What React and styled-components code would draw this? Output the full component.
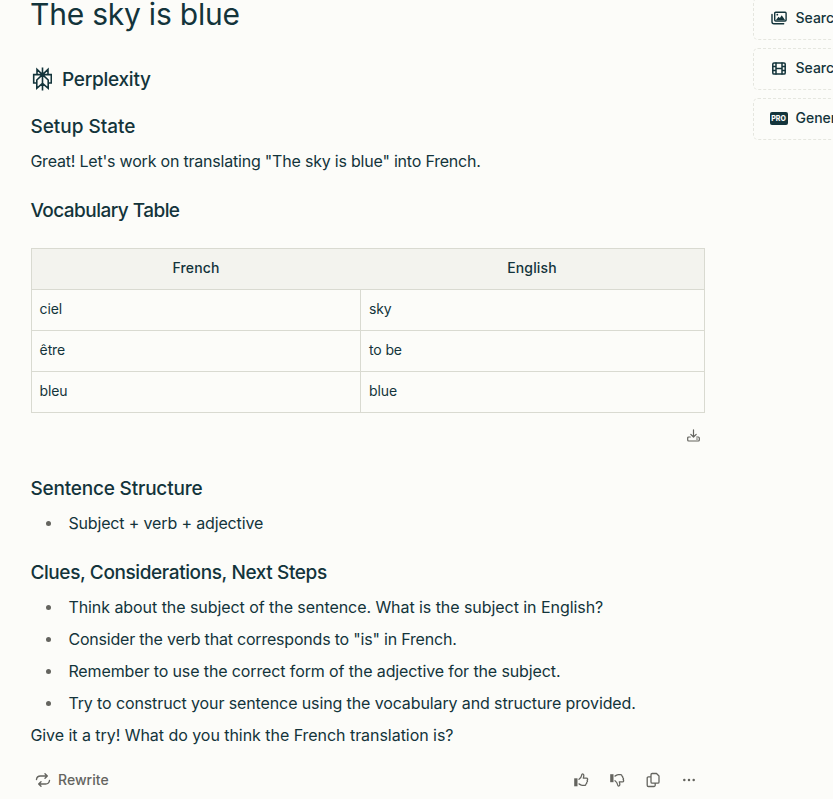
import React from "react";
import styled, { createGlobalStyle } from "styled-components";

const INK = "#13343b";
const MUTED = "#64645f";
const LINE = "#d9dad1";

const Global = createGlobalStyle`
  * { box-sizing: border-box; }
  html, body { margin: 0; background: #fcfcf9; overflow: hidden; }
  body {
    font-family: Inter, "Liberation Sans", sans-serif;
    color: ${INK};
    -webkit-font-smoothing: antialiased;
  }
`;

const Page = styled.div`
  display: flex;
  gap: 48px;
  width: 833px;
  height: 799px;
  padding-left: 30px;
  overflow: hidden;
`;
const Main = styled.main`
  flex: 0 0 675px;
`;
const Title = styled.h1`
  margin: 0;
  font-size: 30px;
  font-weight: 400;
  line-height: 29px;
  letter-spacing: -0.22px;
`;
const Brand = styled.div`
  display: flex;
  align-items: center;
  gap: 10px;
  height: 24px;
  margin-top: 38px;
  padding-left: 2px;
  font-size: 19px;
  font-weight: 500;
  letter-spacing: -0.26px;
`;
const Section = styled.section`
  margin-top: ${(p) => p.$top}px;
`;
const Heading = styled.h2`
  margin: 0;
  height: 28px;
  padding-left: 0.4px;
  font-size: 19px;
  font-weight: 500;
  line-height: 28px;
  white-space: nowrap;
  letter-spacing: ${(p) => p.$track}px;
`;
const Text = styled.p`
  margin: ${(p) => p.$top || 0}px 0 0;
  padding-left: 0.4px;
  font-size: 16px;
  line-height: 24px;
  white-space: nowrap;
  letter-spacing: ${(p) => p.$track}px;
`;
const List = styled.ul`
  list-style: none;
  margin: 8px 0 0;
  padding: 0;
  display: grid;
  gap: 8px;
`;
const Item = styled.li`
  display: flex;
  align-items: center;
  height: 24px;
  padding-left: 16px;
  &::before {
    content: "";
    width: 5px;
    height: 5px;
    margin-right: 17px;
    border-radius: 50%;
    background: ${MUTED};
  }
`;
const Table = styled.table`
  width: 674px;
  margin: 23px 0 0 1px;
  border-collapse: separate;
  border-spacing: 0;
  table-layout: fixed;
  border: 1px solid ${LINE};
  font-size: 14px;
`;
const Th = styled.th`
  height: 41px;
  width: ${(p) => p.$width}px;
  padding: 0 0 3px;
  font-weight: 500;
  text-align: center;
  background: #f3f3ee;
  border-bottom: 1px solid ${LINE};
  letter-spacing: 0.15px;
`;
const Td = styled.td`
  height: 41px;
  padding: 0 8px 3px 7.6px;
  border-bottom: 1px solid ${LINE};
  letter-spacing: -0.12px;
  & + & { border-left: 1px solid ${LINE}; padding-left: 8px; }
  tr:last-child > & { height: 40px; padding-bottom: 3px; border-bottom: 0; }
`;
const TableTools = styled.div`
  display: flex;
  justify-content: flex-end;
  height: 61px;
  padding: 16px 5.5px 0 0;
  color: ${MUTED};
`;
const Footer = styled.footer`
  display: flex;
  align-items: center;
  justify-content: space-between;
  height: 24px;
  margin-top: 21px;
  padding: 0 8px 0 5px;
  color: ${MUTED};
`;
const Rewrite = styled.button`
  display: flex;
  align-items: center;
  gap: 7px;
  padding: 0;
  border: 0;
  background: none;
  color: inherit;
  font: 500 14px/24px Inter, "Liberation Sans", sans-serif;
  letter-spacing: 0.04px;
`;
const Actions = styled.div`
  display: flex;
  align-items: center;
  gap: 20px;
`;
const Aside = styled.aside`
  flex: 0 0 320px;
  display: flex;
  flex-direction: column;
  gap: 8px;
  margin-top: -2px;
`;
const Card = styled.div`
  display: flex;
  align-items: center;
  height: 42px;
  padding: 0 0 2px 15px;
  border: 1px dashed #e5e6df;
  border-radius: 5px;
  font-size: 14px;
  font-weight: 500;
  white-space: nowrap;
`;
const CardLabel = styled.span`
  line-height: 17px;
  padding-bottom: 1px;
  letter-spacing: -0.05px;
`;
const CardIcon = styled.span`
  display: flex;
  justify-content: center;
  width: 20px;
  margin: 0 6.6px 0 0;
`;
const Pro = styled.span`
  width: 18px;
  height: 13px;
  margin-right: 1px;
  border-radius: 2px;
  background: ${INK};
  color: #fcfcf9;
  font-size: 7px;
  font-weight: 800;
  line-height: 13px;
  text-align: center;
`;

const stroke = { fill: "none", stroke: "currentColor", strokeLinejoin: "round", strokeLinecap: "round" };

const Logo = () => (
  <svg width="20" height="24" viewBox="0 0 20 24" fill="none" stroke="currentColor" strokeWidth="1.6">
    <path d="M10.5 .5v23M10.5 7.6L5 2.3v5.3M10.5 7.6L16 2.3v5.3M4.5 16H1.7V7.6h17.6V16h-2.8M10.5 7.6L4.8 13v8.3l5.7-5M10.5 7.6l5.7 5.4v8.3l-5.7-5" />
  </svg>
);
const Download = () => (
  <svg width="13" height="13" viewBox="0 0 13 13" {...stroke} strokeWidth="1.2">
    <path d="M6.5 .8v7M3.8 5.3l2.7 2.7 2.7-2.7M3.3 8H1.7a1 1 0 0 0-1 1v2a1 1 0 0 0 1 1h9.6a1 1 0 0 0 1-1V9a1 1 0 0 0-1-1H9.7" />
    <circle cx="10" cy="10" r=".25" />
  </svg>
);
const Repeat = () => (
  <svg width="16" height="16" viewBox="0 0 16 16" {...stroke} strokeWidth="1.4">
    <path d="M1.5 7.5A4 4 0 0 1 5.5 4h6.8M10 1.8L12.3 4 10 6.2M14.5 8.5a4 4 0 0 1-4 3.5H3.7M6 9.8L3.7 12 6 14.2" />
  </svg>
);
const ThumbUp = () => (
  <svg width="16" height="16" viewBox="0 0 16 16" {...stroke} strokeWidth="1.25">
    <path fill="currentColor" stroke="none" d="M1.2 6.3h3.3v8H1.2z" />
    <path d="M6 7.3c1.5-1 2.3-2.3 2.6-4 .2-1 .6-1.5 1.3-1.3 1.1.3 1.2 1.6.4 4.1h3.1c1.4 0 1.7 1.5.7 2.1.7.7.5 1.6-.4 2 .3.8 0 1.5-.8 1.8.1.9-.5 1.4-1.4 1.4H9.4c-1.4 0-2.2-.8-3.4-1.5" />
  </svg>
);
const ThumbDown = () => (
  <svg width="16" height="16" viewBox="0 0 16 16" {...stroke} strokeWidth="1.25">
    <path fill="currentColor" stroke="none" d="M1.2 2.2h3.3v8H1.2z" />
    <path d="M6 8.7c1.5 1 2.3 2.3 2.6 4 .2 1 .6 1.5 1.3 1.3 1.1-.3 1.2-1.6.4-4.1h3.1c1.4 0 1.7-1.5.7-2.1.7-.7.5-1.6-.4-2 .3-.8 0-1.5-.8-1.8.1-.9-.5-1.4-1.4-1.4H9.4c-1.4 0-2.2.8-3.4 1.5" />
  </svg>
);
const Copy = () => (
  <svg width="16" height="16" viewBox="0 0 16 16" {...stroke} strokeWidth="1.3">
    <path d="M7.2 1.5h4.3L14 4v6a1.2 1.2 0 0 1-1.2 1.2H7.2A1.2 1.2 0 0 1 6 10V2.7A1.2 1.2 0 0 1 7.2 1.5zM5.7 4.8H3.4a1.2 1.2 0 0 0-1.2 1.2v7.3a1.2 1.2 0 0 0 1.2 1.2H9a1.2 1.2 0 0 0 1.2-1.2v-1.8" />
  </svg>
);
const Dots = () => (
  <svg width="16" height="16" viewBox="0 0 16 16" fill="currentColor">
    <circle cx="3.3" cy="8" r="1.25" /><circle cx="8" cy="8" r="1.25" /><circle cx="12.7" cy="8" r="1.25" />
  </svg>
);
const Images = () => (
  <svg width="16" height="14" viewBox="0 0 16 14" {...stroke} strokeWidth="1.4">
    <rect x="3.7" y="1.2" width="11.4" height="8.8" rx="1" />
    <path d="M1 3.5v7.3a1.9 1.9 0 0 0 1.9 1.9h9.8" />
    <path fill="currentColor" stroke="none" d="M5 9l2.5-3.3L8.9 7l1.8-2.8L14 9z" />
    <circle cx="6.3" cy="3.7" r=".9" fill="currentColor" stroke="none" />
  </svg>
);
const Film = () => (
  <svg width="14" height="13" viewBox="0 0 14 13" {...stroke} strokeWidth="1.5">
    <rect x=".8" y=".9" width="12.4" height="11.2" rx="1.2" />
    <path d="M4 1v11M10 1v11M4 6.5h6M1 4.6h3M1 8.4h3M10 4.6h3M10 8.4h3" />
  </svg>
);

const rows = [["ciel", "sky"], ["être", "to be"], ["bleu", "blue"]];
const clues = [
  ["Think about the subject of the sentence. What is the subject in English?", -0.06],
  ['Consider the verb that corresponds to "is" in French.', -0.2],
  ["Remember to use the correct form of the adjective for the subject.", -0.12],
  ["Try to construct your sentence using the vocabulary and structure provided.", -0.115],
];

export default function App() {
  return (
    <Page>
      <Global />
      <Main>
        <Title>The sky is blue</Title>
        <Brand><Logo />Perplexity</Brand>
        <Section $top={22}>
          <Heading $track={-0.02}>Setup State</Heading>
          <Text $top={8} $track={-0.205}>Great! Let's work on translating "The sky is blue" into French.</Text>
        </Section>
        <Section $top={24}>
          <Heading $track={-0.54}>Vocabulary Table</Heading>
          <Table>
            <thead>
              <tr><Th $width={328}>French</Th><Th $width={344}>English</Th></tr>
            </thead>
            <tbody>
              {rows.map(([fr, en]) => (
                <tr key={fr}><Td>{fr}</Td><Td>{en}</Td></tr>
              ))}
            </tbody>
          </Table>
          <TableTools><Download /></TableTools>
        </Section>
        <Section $top={1}>
          <Heading $track={-0.19}>Sentence Structure</Heading>
          <List><Item><Text $track={-0.15}>Subject + verb + adjective</Text></Item></List>
        </Section>
        <Section $top={24}>
          <Heading $track={-0.39}>Clues, Considerations, Next Steps</Heading>
          <List>
            {clues.map(([text, track]) => (
              <Item key={text}><Text $track={track}>{text}</Text></Item>
            ))}
          </List>
          <Text $top={8} $track={-0.045}>Give it a try! What do you think the French translation is?</Text>
        </Section>
        <Footer>
          <Rewrite><Repeat />Rewrite</Rewrite>
          <Actions><ThumbUp /><ThumbDown /><Copy /><Dots /></Actions>
        </Footer>
      </Main>
      <Aside>
        <Card><CardIcon><Images /></CardIcon><CardLabel>Search Images</CardLabel></Card>
        <Card><CardIcon><Film /></CardIcon><CardLabel>Search Videos</CardLabel></Card>
        <Card><CardIcon><Pro>PRO</Pro></CardIcon><CardLabel>Generate Image</CardLabel></Card>
      </Aside>
    </Page>
  );
}
